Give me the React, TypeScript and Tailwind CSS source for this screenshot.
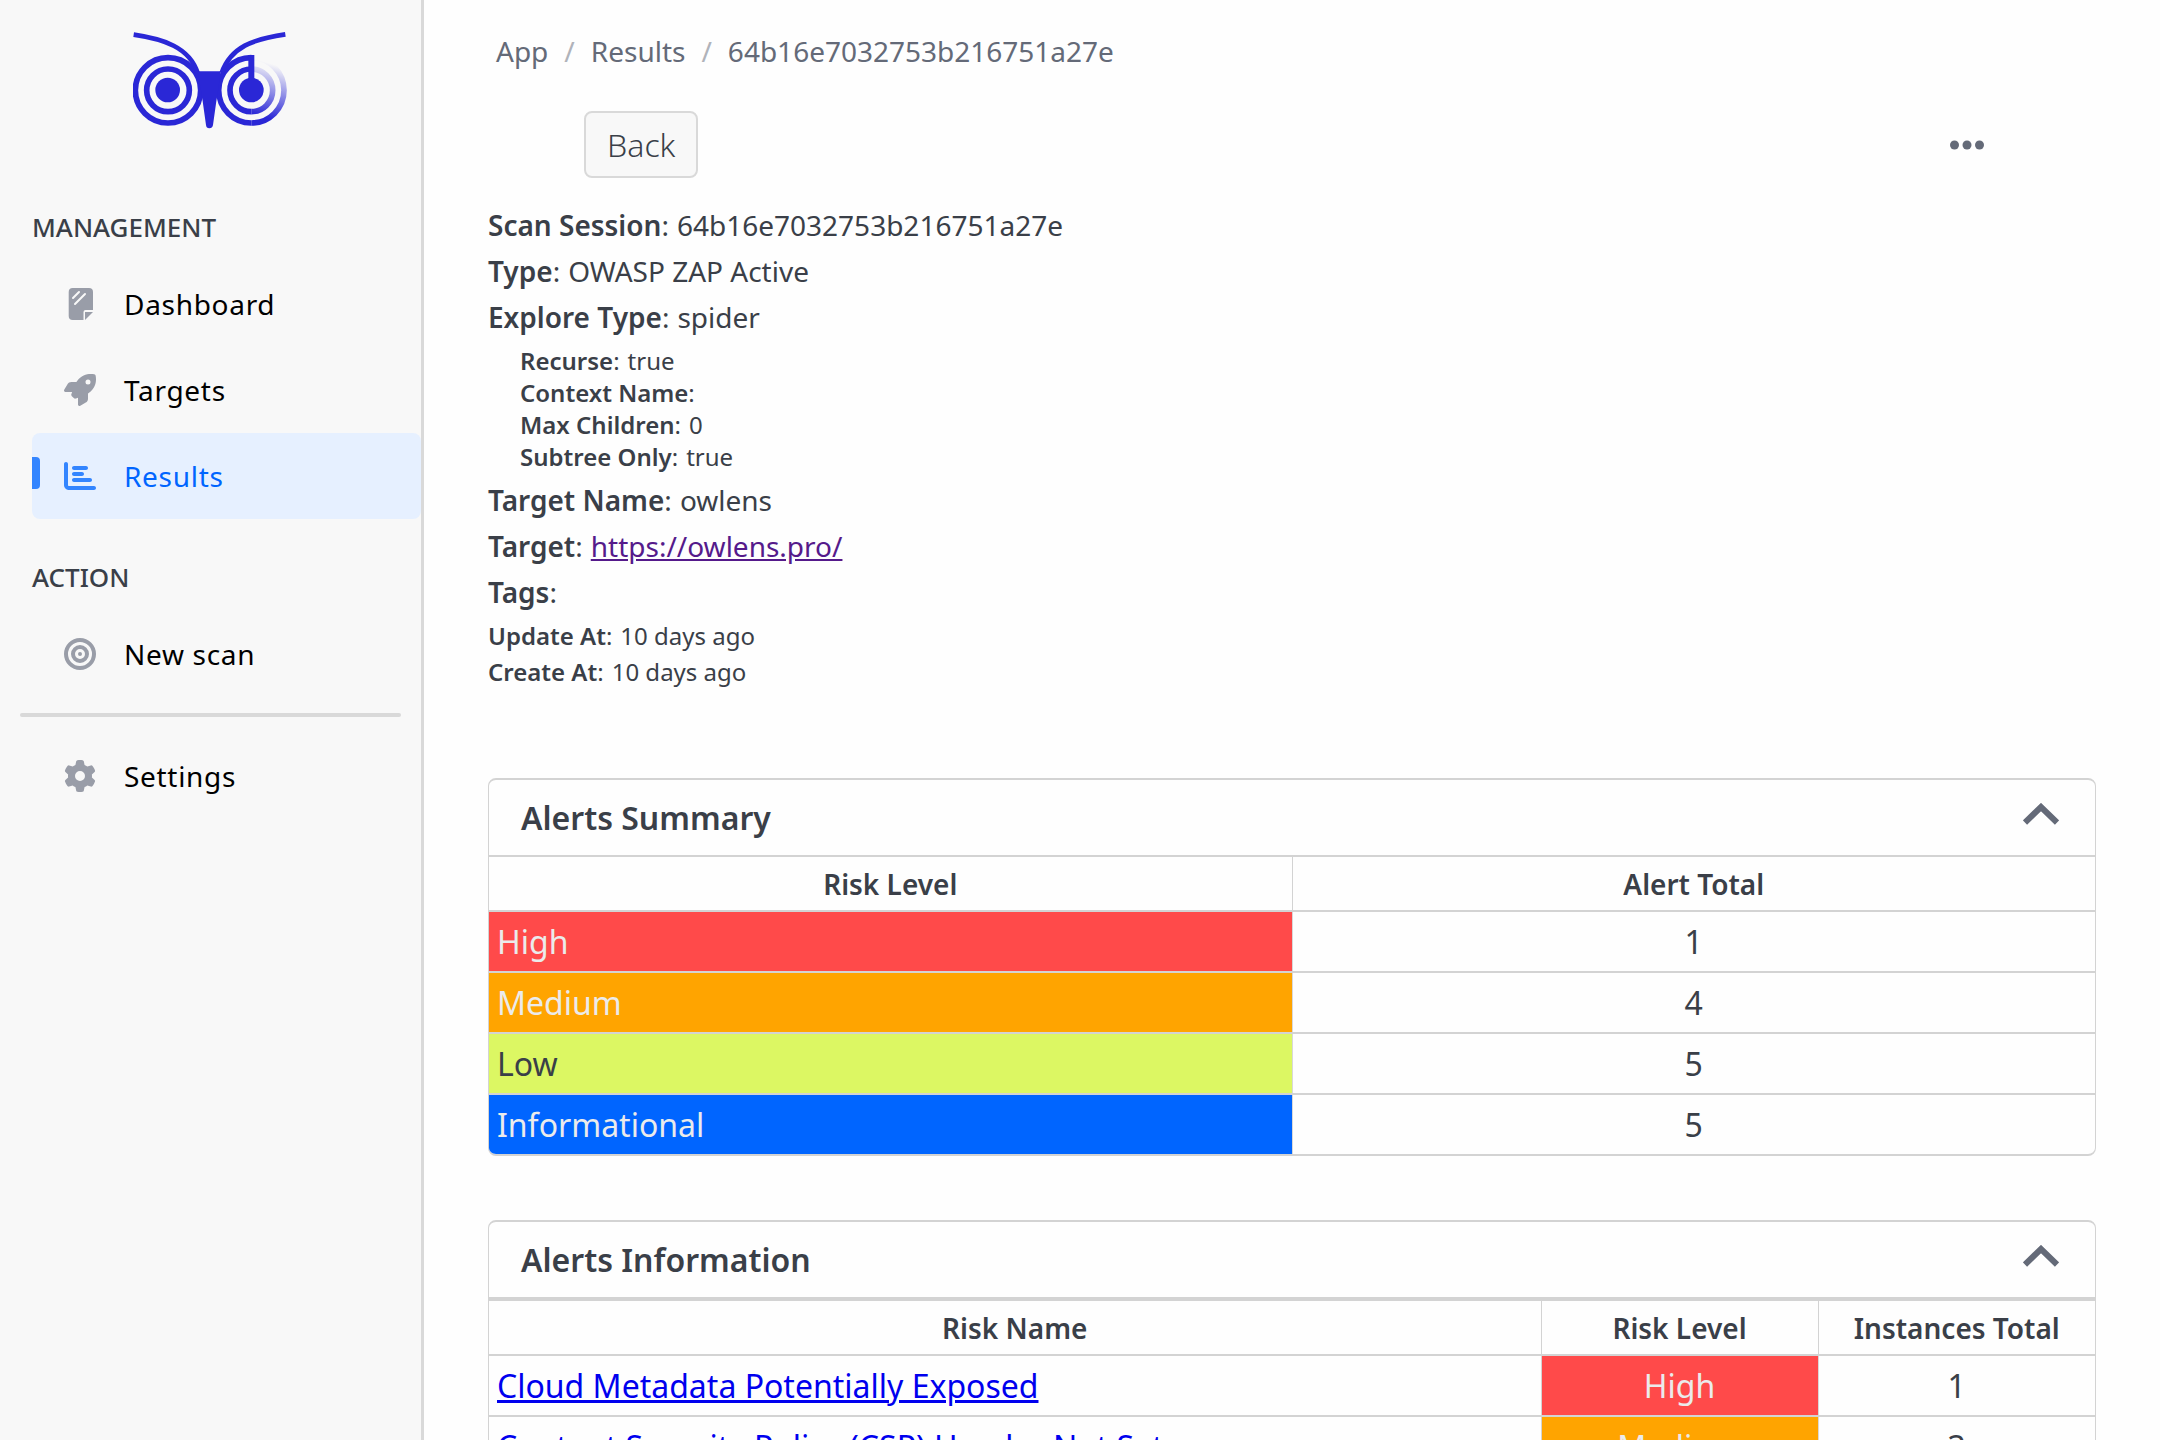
import type { ReactNode } from "react";
import { FaBullseye, FaChartBar, FaGear, FaRocket } from "react-icons/fa6";

function OwlLogo() {
  return (
    <svg viewBox="99 92 462 294" className="h-[98px] w-[154px]" fill="none" role="img" aria-label="Owlens">
      <defs>
        <linearGradient id="fade" gradientUnits="userSpaceOnUse" x1="490" y1="350" x2="534" y2="196">
          <stop offset="0" stopColor="#2a27d6" />
          <stop offset="1" stopColor="#2a27d6" stopOpacity="0" />
        </linearGradient>
      </defs>
      <g stroke="#2a27d6" strokeWidth="17">
        <circle cx="204" cy="270" r="98" />
        <circle cx="204" cy="270" r="64" />
        <path d="M454 172a98 98 0 0 0 0 196" />
        <path d="M454 206a64 64 0 0 0 0 128" />
        <path d="M101 103C190 116 268 140 293 218" strokeWidth="14" />
        <path d="M556 102C460 116 392 140 365 218" strokeWidth="14" />
        <path d="M454 164v80" strokeWidth="18" />
      </g>
      <g stroke="url(#fade)" strokeWidth="17">
        <path d="M454 172a98 98 0 0 1 0 196" />
        <path d="M454 206a64 64 0 0 1 0 128" />
      </g>
      <g fill="#2a27d6">
        <circle cx="203" cy="269" r="37" />
        <circle cx="454" cy="269" r="37" />
        <path d="M294 213h68l-8 60-5 30-10 71q-2 10-11 10t-10-10l-10-71-8-50z" />
      </g>
    </svg>
  );
}

function NoteIcon() {
  return (
    <svg viewBox="0 0 32 32" className="size-8" fill="currentColor" aria-hidden="true">
      <path d="M8.700 0h16.300a4 4 0 0 1 4 4v18h-7.500a2 2 0 0 0-2 2v8H8.700a4 4 0 0 1-4-4V4a4 4 0 0 1 4-4z" />
      <path d="M21 24h8l-8 8z" />
      <path d="M9 10l6-6M11 16L21 6" stroke="#f8f8f8" strokeWidth="2" strokeLinecap="round" />
    </svg>
  );
}

function NavItem({ icon, label, active = false }: { icon: ReactNode; label: string; active?: boolean }) {
  return (
    <li>
      <a
        href="#"
        aria-current={active ? "page" : undefined}
        className={
          active
            ? "relative flex h-[86px] items-center gap-7 rounded-lg bg-[#e6f0ff] pl-8 text-[28px] tracking-wide text-[#0065ff]"
            : "relative flex h-[86px] items-center gap-7 pl-8 text-[28px] tracking-wide text-black"
        }
      >
        {active && <span className="absolute left-0 top-6 h-8 w-2 rounded-r bg-[#3385ff]" />}
        <span className={active ? "text-[32px] text-[#3385ff]" : "text-[32px] text-[#999da8]"}>{icon}</span>
        {label}
      </a>
    </li>
  );
}

function Field({ label, children }: { label: string; children?: ReactNode }) {
  return (
    <div className="flex gap-2">
      <dt>
        <span className="font-semibold">{label}</span>:
      </dt>
      <dd>{children}</dd>
    </div>
  );
}

function Panel({ title, children }: { title: string; children: ReactNode }) {
  return (
    <section className="overflow-hidden rounded-lg border-x border-y-2 border-[#d3d3d3]">
      <header className="flex h-[75px] items-center justify-between pl-8 pr-9">
        <h2 className="text-[32px] font-semibold">{title}</h2>
        <button type="button" aria-label={"Collapse " + title} className="text-[#646a78]">
          <svg viewBox="0 0 36 22" className="mb-2 h-[22px] w-9" fill="none" stroke="currentColor" strokeWidth="6" aria-hidden="true">
            <path d="M2 19.500L18 4l16 15.500" />
          </svg>
        </button>
      </header>
      {children}
    </section>
  );
}

const riskColors: Record<string, string> = {
  High: "bg-[#ff4a4a] text-[#ebebeb]",
  Medium: "bg-[#ffa400] text-[#ebebeb]",
  Low: "bg-[#dcf763]",
  Informational: "bg-[#0065ff] text-[#ebebeb]",
};

const summary = [
  { level: "High", total: 1 },
  { level: "Medium", total: 4 },
  { level: "Low", total: 5 },
  { level: "Informational", total: 5 },
];

const alerts = [
  { name: "Cloud Metadata Potentially Exposed", level: "High", total: 1 },
  { name: "Content Security Policy (CSP) Header Not Set", level: "Medium", total: 3 },
];

export default function App() {
  return (
    <div className="flex h-screen overflow-hidden bg-[#fefefe] font-['Noto_Sans',sans-serif] text-[#3a3f48]">
      <aside className="w-[424px] shrink-0 border-r-[3px] border-[#d9d9d9] bg-[#f8f8f8]">
        <div className="flex justify-center pr-0.5 pt-[31px]">
          <OwlLogo />
        </div>
        <nav className="pt-20">
          <h2 className="pl-8 text-[26px] leading-9 font-medium">MANAGEMENT</h2>
          <ul className="mt-4 pl-8">
            <NavItem icon={<NoteIcon />} label="Dashboard" />
            <NavItem icon={<FaRocket />} label="Targets" />
            <NavItem icon={<FaChartBar />} label="Results" active />
          </ul>
          <h2 className="mt-10 pl-8 text-[26px] leading-9 font-medium">ACTION</h2>
          <ul className="mt-4 pl-8">
            <NavItem icon={<FaBullseye />} label="New scan" />
          </ul>
          <hr className="mx-5 my-4 h-1 rounded-full border-0 bg-[#d9d9d9]" />
          <ul className="pl-8">
            <NavItem icon={<FaGear />} label="Settings" />
          </ul>
        </nav>
      </aside>

      <main className="min-w-0 flex-1 overflow-hidden px-16">
        <nav aria-label="Breadcrumb" className="pl-2 pt-[31px] text-[28px] leading-10 text-[#646a78]">
          <ol className="flex gap-4">
            <li><a href="#">App</a></li>
            <li aria-hidden="true" className="text-[#b0b3ba]">/</li>
            <li><a href="#">Results</a></li>
            <li aria-hidden="true" className="text-[#b0b3ba]">/</li>
            <li>64b16e7032753b216751a27e</li>
          </ol>
        </nav>

        <div className="mt-10 flex items-center justify-between pl-24 pr-28">
          <button type="button" className="h-[67px] rounded-lg border-2 border-[#d9d9d9] bg-[#f8f8f8] px-[21px] text-[32px] font-light">
            Back
          </button>
          <button type="button" aria-label="More actions" className="text-[#646a78]">
            <svg viewBox="0 0 34 10" className="h-[10px] w-[34px]" fill="currentColor" aria-hidden="true">
              <circle cx="4.500" cy="5" r="4.500" />
              <circle cx="17" cy="5" r="4.500" />
              <circle cx="29.500" cy="5" r="4.500" />
            </svg>
          </button>
        </div>

        <dl className="mt-6 text-[28px] leading-[46px]">
          <Field label="Scan Session">64b16e7032753b216751a27e</Field>
          <Field label="Type">OWASP ZAP Active</Field>
          <Field label="Explore Type">spider</Field>
          <div className="pb-1 pl-8 pt-[5px] text-2xl leading-8">
            <Field label="Recurse">true</Field>
            <Field label="Context Name" />
            <Field label="Max Children">0</Field>
            <Field label="Subtree Only">true</Field>
          </div>
          <Field label="Target Name">owlens</Field>
          <Field label="Target">
            <a href="https://owlens.pro/" className="text-[#551a8b] underline">https://owlens.pro/</a>
          </Field>
          <Field label="Tags" />
          <div className="pt-[3px] text-2xl leading-9">
            <Field label="Update At">10 days ago</Field>
            <Field label="Create At">10 days ago</Field>
          </div>
        </dl>

        <div className="mt-[88px] flex flex-col gap-16">
          <Panel title="Alerts Summary">
            <table className="w-full table-fixed border-t-2 border-[#d3d3d3] text-[32px]">
              <thead>
                <tr className="h-[55px] text-[28px]">
                  <th className="border-r border-[#d3d3d3] font-semibold">Risk Level</th>
                  <th className="font-semibold">Alert Total</th>
                </tr>
              </thead>
              <tbody>
                {summary.map((row) => (
                  <tr key={row.level} className="h-[61px] border-t-2 border-[#d3d3d3] last:h-[60px]">
                    <td className={"border-r border-black/15 px-2 " + riskColors[row.level]}>{row.level}</td>
                    <td className="text-center">{row.total}</td>
                  </tr>
                ))}
              </tbody>
            </table>
          </Panel>

          <Panel title="Alerts Information">
            <table className="w-full table-fixed border-t-4 border-[#d3d3d3] text-[32px]">
              <colgroup>
                <col />
                <col className="w-[277px]" />
                <col className="w-[277px]" />
              </colgroup>
              <thead>
                <tr className="h-[56px] text-[28px]">
                  <th className="border-r border-[#d3d3d3] font-semibold">Risk Name</th>
                  <th className="border-r border-[#d3d3d3] font-semibold">Risk Level</th>
                  <th className="font-semibold">Instances Total</th>
                </tr>
              </thead>
              <tbody>
                {alerts.map((row) => (
                  <tr key={row.name} className="h-[61px] border-t-2 border-[#d3d3d3]">
                    <td className="border-r border-[#d3d3d3] px-2">
                      <a href="#" className="text-[#0000ee] underline decoration-[3px]">{row.name}</a>
                    </td>
                    <td className={"border-r border-black/15 text-center " + riskColors[row.level]}>{row.level}</td>
                    <td className="text-center">{row.total}</td>
                  </tr>
                ))}
              </tbody>
            </table>
          </Panel>
        </div>
      </main>
    </div>
  );
}
